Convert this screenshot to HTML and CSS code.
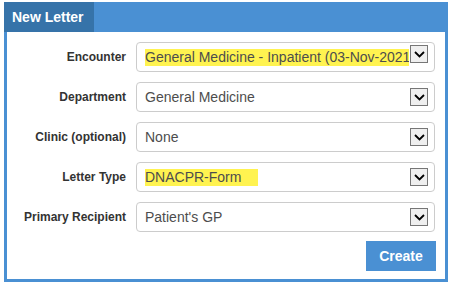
FILE: index.html
```html
<!DOCTYPE html>
<html>
<head>
<meta charset="utf-8">
<link rel="stylesheet" href="styles.css">
</head>
<body>
<div class="panel">
  <div class="header"><div class="tab">New Letter</div></div>
  <div class="body">
    <div class="row">
      <div class="label">Encounter</div>
      <div class="select">
        <span class="val hl">General Medicine - Inpatient (03-Nov-2021</span>
        <span class="arrow top"><svg width="11" height="7" viewBox="0 0 11 7"><path d="M1 1 L5.5 5.5 L10 1" fill="none" stroke="#000" stroke-width="1.8"/></svg></span>
      </div>
    </div>
    <div class="row">
      <div class="label">Department</div>
      <div class="select">
        <span class="val">General Medicine</span>
        <span class="arrow"><svg width="11" height="7" viewBox="0 0 11 7"><path d="M1 1 L5.5 5.5 L10 1" fill="none" stroke="#000" stroke-width="1.8"/></svg></span>
      </div>
    </div>
    <div class="row">
      <div class="label">Clinic (optional)</div>
      <div class="select">
        <span class="val">None</span>
        <span class="arrow"><svg width="11" height="7" viewBox="0 0 11 7"><path d="M1 1 L5.5 5.5 L10 1" fill="none" stroke="#000" stroke-width="1.8"/></svg></span>
      </div>
    </div>
    <div class="row">
      <div class="label">Letter Type</div>
      <div class="select">
        <span class="val hl pad">DNACPR-Form</span>
        <span class="arrow"><svg width="11" height="7" viewBox="0 0 11 7"><path d="M1 1 L5.5 5.5 L10 1" fill="none" stroke="#000" stroke-width="1.8"/></svg></span>
      </div>
    </div>
    <div class="row">
      <div class="label">Primary Recipient</div>
      <div class="select">
        <span class="val">Patient's GP</span>
        <span class="arrow"><svg width="11" height="7" viewBox="0 0 11 7"><path d="M1 1 L5.5 5.5 L10 1" fill="none" stroke="#000" stroke-width="1.8"/></svg></span>
      </div>
    </div>
    <div class="actions"><button class="create">Create</button></div>
  </div>
</div>
</body>
</html>
```
FILE: styles.css
```css
html, body { margin: 0; padding: 0; background: #fff; }
body { font-family: "Liberation Sans", Arial, sans-serif; }
.panel { margin: 2px 0 0 4px; width: 444px; }
.header { background: #4a90d3; height: 30px; display: flex; }
.tab { background: #3673a9; color: #fff; font-weight: bold; font-size: 14px; width: 82px; padding-left: 8px; line-height: 30px; }
.body { border: 3px solid #4a90d3; border-top: 0; box-sizing: border-box; height: 250px; padding: 10px 10px 0 0; display: flex; flex-direction: column; gap: 10px; }
.row { display: flex; align-items: center; gap: 10px; height: 30px; }
.label { width: 119px; flex: none; text-align: right; font-weight: bold; font-size: 12px; color: #333; }
.select { flex: 1; min-width: 0; height: 30px; box-sizing: border-box; border: 1px solid #ccc; border-radius: 4px; display: flex; align-items: center; padding: 0 6px 0 8px; }
.val { font-size: 14px; color: #4d4d4d; white-space: nowrap; line-height: 17px; flex: 1; min-width: 0; overflow: hidden; }
.hl { background: #fff350; flex: 0 1 auto; }
.pad { padding-right: 17px; }
.arrow { margin-left: auto; width: 18px; height: 18px; box-sizing: border-box; border: 1px solid #767676; background: #efefef; display: flex; align-items: center; justify-content: center; flex: none; }
.arrow.top { align-self: flex-start; margin-top: 2px; margin-left: 1px; }
.actions { display: flex; justify-content: flex-end; margin-top: -1px; }
.create { width: 70px; height: 30px; border: 0; background: #4a90d3; color: #fff; font-family: "Liberation Sans", Arial, sans-serif; font-weight: bold; font-size: 14px; margin-right: -1px; padding: 0; }
```
